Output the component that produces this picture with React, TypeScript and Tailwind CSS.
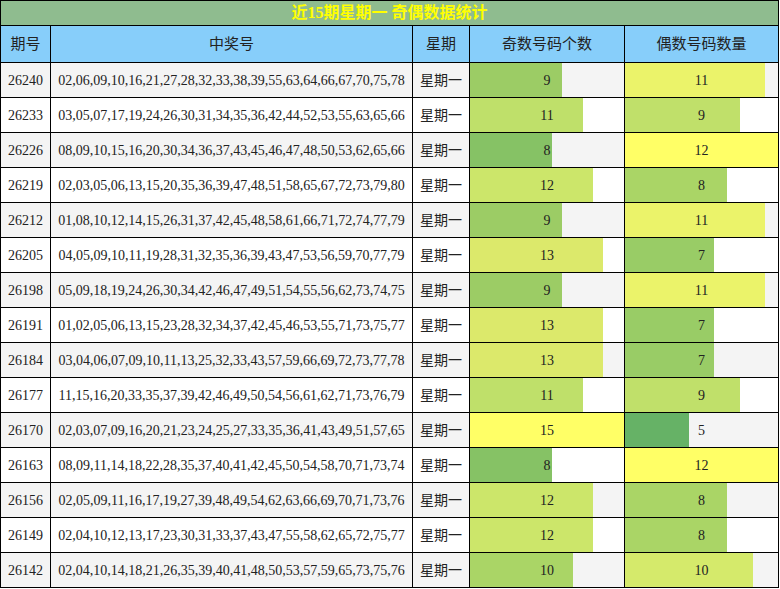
const rows: [string, string, number, number][] = [
  ["26240", "02,06,09,10,16,21,27,28,32,33,38,39,55,63,64,66,67,70,75,78", 9, 11],
  ["26233", "03,05,07,17,19,24,26,30,31,34,35,36,42,44,52,53,55,63,65,66", 11, 9],
  ["26226", "08,09,10,15,16,20,30,34,36,37,43,45,46,47,48,50,53,62,65,66", 8, 12],
  ["26219", "02,03,05,06,13,15,20,35,36,39,47,48,51,58,65,67,72,73,79,80", 12, 8],
  ["26212", "01,08,10,12,14,15,26,31,37,42,45,48,58,61,66,71,72,74,77,79", 9, 11],
  ["26205", "04,05,09,10,11,19,28,31,32,35,36,39,43,47,53,56,59,70,77,79", 13, 7],
  ["26198", "05,09,18,19,24,26,30,34,42,46,47,49,51,54,55,56,62,73,74,75", 9, 11],
  ["26191", "01,02,05,06,13,15,23,28,32,34,37,42,45,46,53,55,71,73,75,77", 13, 7],
  ["26184", "03,04,06,07,09,10,11,13,25,32,33,43,57,59,66,69,72,73,77,78", 13, 7],
  ["26177", "11,15,16,20,33,35,37,39,42,46,49,50,54,56,61,62,71,73,76,79", 11, 9],
  ["26170", "02,03,07,09,16,20,21,23,24,25,27,33,35,36,41,43,49,51,57,65", 15, 5],
  ["26163", "08,09,11,14,18,22,28,35,37,40,41,42,45,50,54,58,70,71,73,74", 8, 12],
  ["26156", "02,05,09,11,16,17,19,27,39,48,49,54,62,63,66,69,70,71,73,76", 12, 8],
  ["26149", "02,04,10,12,13,17,23,30,31,33,37,43,47,55,58,62,65,72,75,77", 12, 8],
  ["26142", "02,04,10,14,18,21,26,35,39,40,41,48,50,53,57,59,65,73,75,76", 10, 10],
];

// bar length is relative to the column maximum
const oddMax = Math.max(...rows.map((r) => r[2]));
const evenMax = Math.max(...rows.map((r) => r[3]));

// colour scale per column (low = green, high = yellow)
const oddColors: Record<number, string> = {
  8: "bg-[#86c265]",
  9: "bg-[#9ccc65]",
  10: "bg-[#aad566]",
  11: "bg-[#bfe06a]",
  12: "bg-[#cce66a]",
  13: "bg-[#dce96b]",
  15: "bg-[#ffff66]",
};
const evenColors: Record<number, string> = {
  5: "bg-[#66b266]",
  7: "bg-[#99cc66]",
  8: "bg-[#aad566]",
  9: "bg-[#c0e06a]",
  10: "bg-[#d5ea6b]",
  11: "bg-[#ebf36a]",
  12: "bg-[#ffff66]",
};

function BarCell({ n, max, color, bg }: { n: number; max: number; color: string; bg: string }) {
  return (
    <div className={`relative flex items-center justify-center text-[14px] ${bg}`}>
      <div className={`absolute left-0 top-0 bottom-0 ${color}`} style={{ width: `${(n / max) * 100}%` }} />
      <span className="relative">{n}</span>
    </div>
  );
}

export default function App() {
  return (
    <div
      className="w-[779px] bg-black p-px text-[#222]"
      style={{ fontFamily: '"Liberation Serif", "Noto Sans CJK SC", serif' }}
    >
      <div className="grid grid-cols-[49px_361px_56px_154px_153px] gap-px">
        <div className="col-span-5 flex h-[24px] items-center justify-center bg-[#8fbc8f] text-[16px] font-bold text-[#ffff00]">
          近15期星期一 奇偶数据统计
        </div>

        {["期号", "中奖号", "星期", "奇数号码个数", "偶数号码数量"].map((h) => (
          <div key={h} className="flex h-[36px] items-center justify-center bg-[#87cefa] text-[15px]">
            {h}
          </div>
        ))}

        {rows.map(([issue, nums, odd, even], i) => {
          const bg = i % 2 === 0 ? "bg-[#f4f4f4]" : "bg-white";
          return [
            <div key={issue + "a"} className={`flex h-[34px] items-center justify-center text-[14px] ${bg}`}>
              {issue}
            </div>,
            <div key={issue + "b"} className={`flex items-center justify-center text-[14px] ${bg}`}>
              {nums}
            </div>,
            <div key={issue + "c"} className={`flex items-center justify-center text-[14px] ${bg}`}>
              星期一
            </div>,
            <BarCell key={issue + "d"} n={odd} max={oddMax} color={oddColors[odd]} bg={bg} />,
            <BarCell key={issue + "e"} n={even} max={evenMax} color={evenColors[even]} bg={bg} />,
          ];
        })}
      </div>
    </div>
  );
}
